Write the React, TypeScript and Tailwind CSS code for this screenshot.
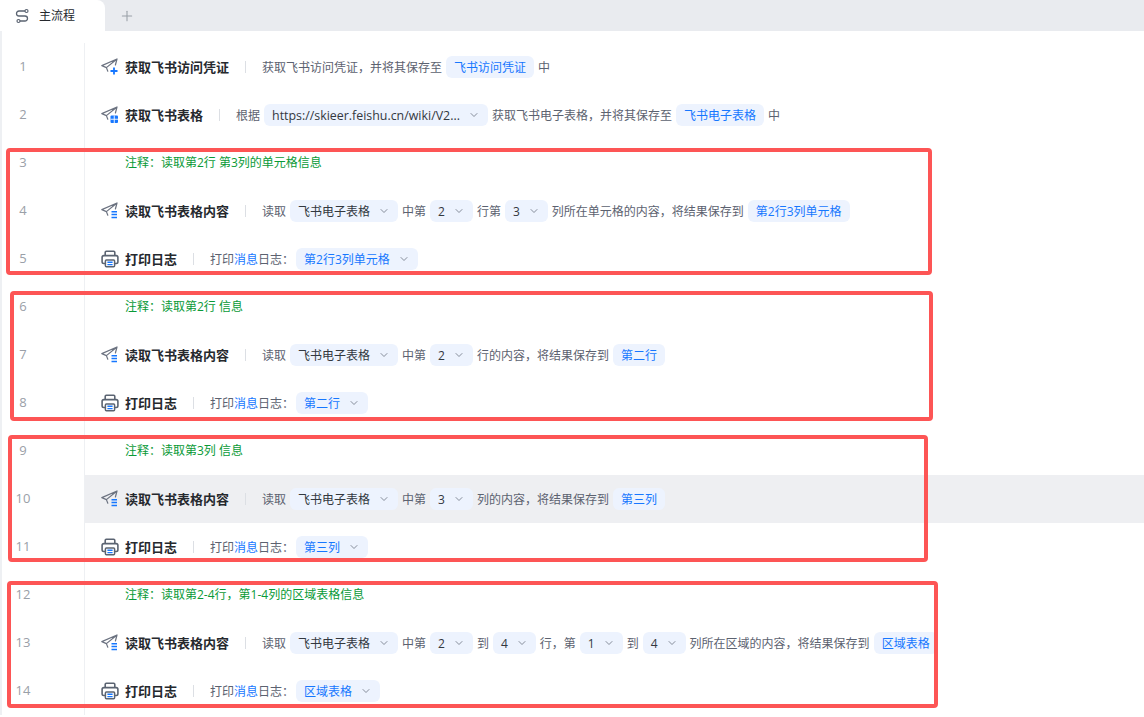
import { ChevronDown, Plus } from "lucide-react";
import type { ReactNode } from "react";

const FONT = "font-['Open_Sans','Noto_Sans_CJK_SC',sans-serif]";

// one flat piece per inline element of a step row
type Part =
  | { t: ReactNode }
  | { v: string }
  | { s: ReactNode }
  | { sv: string };

type Row = {
  n: number;
  note?: string;
  icon?: "add" | "grid" | "read" | "print";
  title?: string;
  parts?: Part[];
  active?: boolean;
};

const printRow = (n: number, name: string): Row => ({
  n,
  icon: "print",
  title: "打印日志",
  parts: [
    {
      t: (
        <span className="-mr-[2px]">
          打印<span className="text-[#1677ff]">消息</span>日志：
        </span>
      ),
    },
    { sv: name },
  ],
});

const SHEET: Part = { s: "飞书电子表格" };

const rows: Row[] = [
  { n: 1, icon: "add", title: "获取飞书访问凭证", parts: [{ t: "获取飞书访问凭证，并将其保存至" }, { v: "飞书访问凭证" }, { t: "中" }] },
  {
    n: 2,
    icon: "grid",
    title: "获取飞书表格",
    parts: [{ t: "根据" }, { s: <span className="text-[12.4px]">https://skieer.feishu.cn/wiki/V2...</span> }, { t: "获取飞书电子表格，并将其保存至" }, { v: "飞书电子表格" }, { t: "中" }],
  },
  { n: 3, note: "注释：读取第2行 第3列的单元格信息" },
  {
    n: 4,
    icon: "read",
    title: "读取飞书表格内容",
    parts: [{ t: "读取" }, SHEET, { t: "中第" }, { s: "2" }, { t: "行第" }, { s: "3" }, { t: "列所在单元格的内容，将结果保存到" }, { v: "第2行3列单元格" }],
  },
  printRow(5, "第2行3列单元格"),
  { n: 6, note: "注释：读取第2行 信息" },
  { n: 7, icon: "read", title: "读取飞书表格内容", parts: [{ t: "读取" }, SHEET, { t: "中第" }, { s: "2" }, { t: "行的内容，将结果保存到" }, { v: "第二行" }] },
  printRow(8, "第二行"),
  { n: 9, note: "注释：读取第3列 信息" },
  { n: 10, active: true, icon: "read", title: "读取飞书表格内容", parts: [{ t: "读取" }, SHEET, { t: "中第" }, { s: "3" }, { t: "列的内容，将结果保存到" }, { v: "第三列" }] },
  printRow(11, "第三列"),
  { n: 12, note: "注释：读取第2-4行，第1-4列的区域表格信息" },
  {
    n: 13,
    icon: "read",
    title: "读取飞书表格内容",
    parts: [{ t: "读取" }, SHEET, { t: "中第" }, { s: "2" }, { t: "到" }, { s: "4" }, { t: "行，第" }, { s: "1" }, { t: "到" }, { s: "4" }, { t: "列所在区域的内容，将结果保存到" }, { v: "区域表格" }],
  },
  printRow(14, "区域表格"),
];

const Plane = ({ children }: { children: ReactNode }) => (
  <svg width="18" height="18" viewBox="0 0 18 18" fill="none" className="shrink-0">
    <path d="M16 1 .8 7.6l4.6 2 1.4 3.6M16 1 5.4 9.6M16 1l-1.6 6" stroke="#6b7280" strokeWidth="1.2" strokeLinejoin="round" strokeLinecap="round" />
    {children}
  </svg>
);

const StepIcon = ({ kind }: { kind: NonNullable<Row["icon"]> }) => {
  if (kind === "add")
    return (
      <Plane>
        <path d="M13 9.5v7M9.5 13h7" stroke="#1677ff" strokeWidth="1.8" />
      </Plane>
    );
  if (kind === "grid")
    return (
      <Plane>
        <rect x="9.5" y="9.5" width="7.5" height="7.5" rx="1" fill="#1677ff" />
        <path d="M13.25 9.5V17M9.5 13.25H17" stroke="#fff" strokeWidth="0.9" />
      </Plane>
    );
  if (kind === "read")
    return (
      <Plane>
        <path d="M10.5 9.8h5.5M10.5 12.6h5.5M10.5 15.4h5.5" stroke="#1677ff" strokeWidth="1.5" />
      </Plane>
    );
  return (
    <svg width="18" height="18" viewBox="0 0 18 18" fill="none" className="shrink-0">
      <path d="M4.2 5.5V2.4c0-.6.5-1.1 1.1-1.1h7.4c.6 0 1.1.5 1.1 1.1v3.1" stroke="#5b6472" strokeWidth="1.6" />
      <path d="M4 13.5H2.8A1.7 1.7 0 0 1 1.1 11.8V7.4c0-1 .8-1.8 1.8-1.8h12.2c1 0 1.8.8 1.8 1.8v4.4a1.7 1.7 0 0 1-1.7 1.7H14" stroke="#5b6472" strokeWidth="1.6" />
      <rect x="4.4" y="10" width="9.2" height="6.8" rx="1" stroke="#5b6472" strokeWidth="1.5" />
      <path d="M6.4 12.2h5.2M6.4 14.6h5.2" stroke="#1677ff" strokeWidth="1.4" />
    </svg>
  );
};

const PartView = ({ part }: { part: Part }) => {
  if ("t" in part) return <span className="pt-[2px] text-[#5c6270]">{part.t}</span>;
  if ("v" in part) return <span className="flex h-[22px] shrink-0 items-center rounded-md bg-[#edf3fe] px-2 pt-[2px] text-[#1677ff]">{part.v}</span>;
  const text = "s" in part ? part.s : part.sv;
  return (
    <span className={`flex h-[22px] shrink-0 items-center gap-2 rounded-md bg-[#edf3fe] px-2 ${"s" in part ? "text-[#33383f]" : "text-[#1677ff]"}`}>
      <span className="pt-[2px]">{text}</span>
      <ChevronDown size={12} strokeWidth={1.6} className="text-[#6b7280]" />
    </span>
  );
};

const FlowRow = ({ row }: { row: Row }) => (
  <div className="flex h-12 items-center">
    <div className="w-[82px] shrink-0 pr-[40px] text-center text-[13px] text-[#9aa0a8]">{row.n}</div>
    <div className={`flex h-12 min-w-0 flex-1 items-center gap-1 border-l border-[#eef0f3] pl-4 text-xs whitespace-nowrap ${row.active ? "bg-[#eeeff2]" : ""}`}>
      {row.note ? (
        <span className="pl-6 text-[#0a9a37]">{row.note}</span>
      ) : (
        <>
          <StepIcon kind={row.icon!} />
          <span className="ml-[2px] pt-[2px] text-[13px] font-bold text-[#26292e]">{row.title}</span>
          <span className="mx-3 h-3 w-px bg-[#dcdfe4]" />
          {row.parts!.map((p, i) => (
            <PartView key={i} part={p} />
          ))}
        </>
      )}
    </div>
  </div>
);

export default function App() {
  return (
    <div className={`relative h-[717px] w-[1144px] overflow-hidden bg-white ${FONT}`}>
      {/* Tab bar */}
      <div className="flex h-[31px] bg-[#e9ebef]">
        <div className="flex w-[105px] items-center gap-[9px] rounded-tr-lg bg-white pl-[14px] text-xs text-[#26292e]">
          <svg width="16" height="16" viewBox="0 0 16 16" fill="none">
            <path d="M11 3H5a2.5 2.5 0 0 0 0 5h6a2.5 2.5 0 0 1 0 5H6" stroke="#5b6472" strokeWidth="1.3" />
            <circle cx="12.5" cy="3" r="1.5" stroke="#5b6472" strokeWidth="1.2" fill="#fff" />
            <circle cx="4.5" cy="13" r="1.5" stroke="#5b6472" strokeWidth="1.2" fill="#fff" />
          </svg>
          主流程
        </div>
        <div className="flex items-center pl-[14px] text-[#9aa0a8]">
          <Plus size={16} strokeWidth={1.6} />
        </div>
      </div>

      {/* Steps */}
      <div className="border-l-2 border-[#eef0f3] pt-3">
        {rows.map(r => (
          <FlowRow key={r.n} row={r} />
        ))}
      </div>

      {/* Annotation boxes drawn over the screenshot */}
      <div className="absolute left-[6px] top-[148px] h-[127px] w-[926px] rounded-sm border-4 border-[#fd5555]" />
      <div className="absolute left-[10px] top-[291px] h-[130px] w-[923px] rounded-sm border-4 border-[#fd5555]" />
      <div className="absolute left-[8px] top-[435px] h-[127px] w-[920px] rounded-sm border-4 border-[#fd5555]" />
      <div className="absolute left-[7px] top-[581px] h-[127px] w-[931px] rounded-sm border-4 border-[#fd5555]" />
    </div>
  );
}
